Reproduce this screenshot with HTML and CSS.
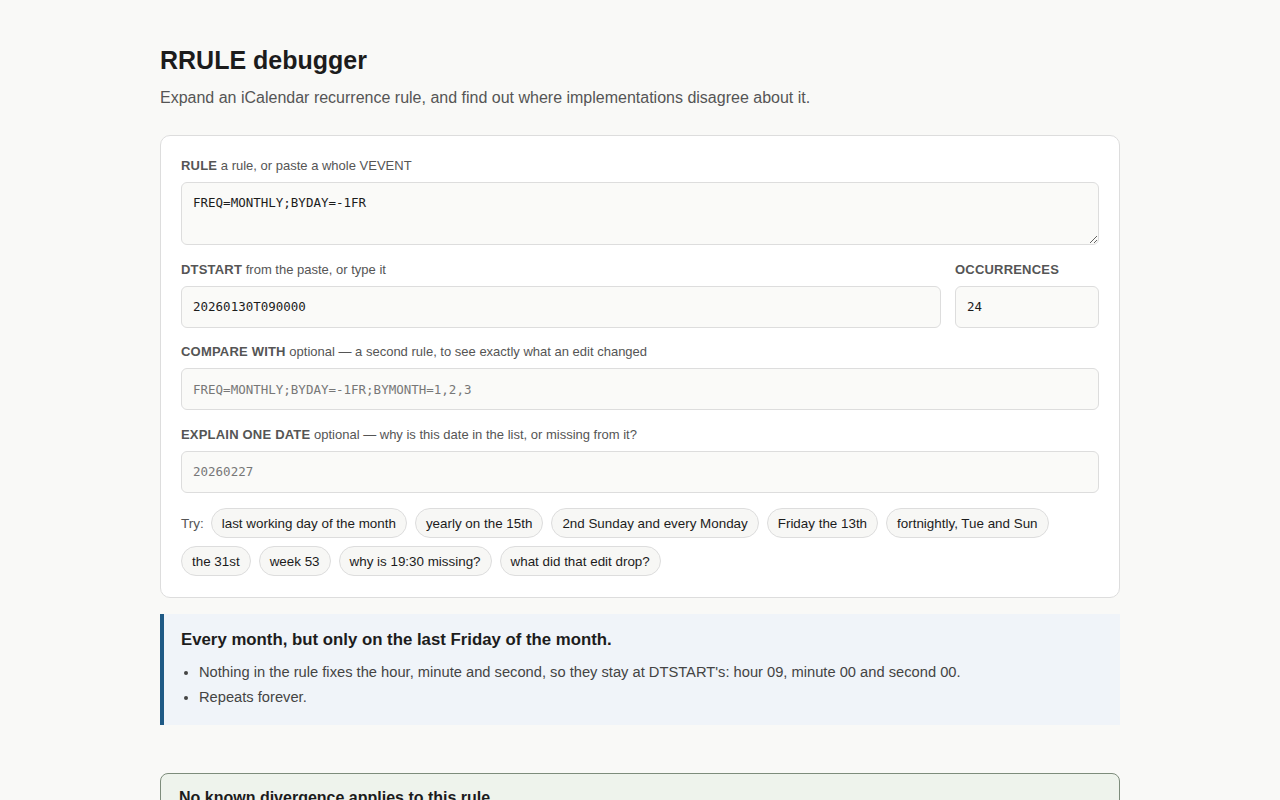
FILE: index.html
```html
<!DOCTYPE html>
<html lang="en">
<head>
  <meta charset="UTF-8" />
  <meta name="viewport" content="width=device-width, initial-scale=1.0"/>
  <title>RRULE debugger</title>
  <link rel="stylesheet" href="styles.css">
</head>
<body>
  <main class="page">
    <h1>RRULE debugger</h1>
    <p class="lead">Expand an iCalendar recurrence rule, and find out where implementations disagree about it.</p>

    <section class="card">
      <div class="field">
        <label><b>RULE</b> a rule, or paste a whole VEVENT</label>
        <textarea class="mono" rows="2">FREQ=MONTHLY;BYDAY=-1FR</textarea>
      </div>

      <div class="row">
        <div class="field grow">
          <label><b>DTSTART</b> from the paste, or type it</label>
          <input class="mono" type="text" value="20260130T090000" />
        </div>
        <div class="field count">
          <label><b>OCCURRENCES</b></label>
          <input class="mono" type="text" value="24" />
        </div>
      </div>

      <div class="field">
        <label><b>COMPARE WITH</b> optional — a second rule, to see exactly what an edit changed</label>
        <input class="mono" type="text" placeholder="FREQ=MONTHLY;BYDAY=-1FR;BYMONTH=1,2,3" />
      </div>

      <div class="field">
        <label><b>EXPLAIN ONE DATE</b> optional — why is this date in the list, or missing from it?</label>
        <input class="mono" type="text" placeholder="20260227" />
      </div>

      <div class="examples">
        <span class="try">Try:</span>
        <button class="chip">last working day of the month</button>
        <button class="chip">yearly on the 15th</button>
        <button class="chip">2nd Sunday and every Monday</button>
        <button class="chip">Friday the 13th</button>
        <button class="chip">fortnightly, Tue and Sun</button>
        <button class="chip">the 31st</button>
        <button class="chip">week 53</button>
        <button class="chip">why is 19:30 missing?</button>
        <button class="chip">what did that edit drop?</button>
      </div>
    </section>

    <section class="summary">
      <h2>Every month, but only on the last Friday of the month.</h2>
      <ul>
        <li>Nothing in the rule fixes the hour, minute and second, so they stay at DTSTART's: hour 09, minute 00 and second 00.</li>
        <li>Repeats forever.</li>
      </ul>
    </section>

    <section class="verdict">
      <h2>No known divergence applies to this rule.</h2>
    </section>
  </main>
</body>
</html>
```

FILE: styles.css
```css
body {
  margin: 0;
  background: #f9f9f7;
  color: #1c1c1c;
  font-family: "Liberation Sans", Arial, sans-serif;
}

.page {
  width: 960px;
  margin: 0 auto;
  padding-top: 46px;
}

h1 {
  font-size: 25px;
  margin: 0 0 14px;
  color: #1c1c1c;
}

.lead {
  font-size: 16px;
  color: #555;
  margin: 0 0 28px;
}

.card {
  background: #fff;
  border: 1px solid #ddd;
  border-radius: 10px;
  padding: 22px 20px 21px;
  display: flex;
  flex-direction: column;
  gap: 16.5px;
}

.field {
  display: flex;
  flex-direction: column;
  gap: 8px;
}

label {
  font-size: 13px;
  color: #555;
  line-height: 16px;
}

label b {
  letter-spacing: 0.2px;
}

.mono {
  font-family: "DejaVu Sans Mono", monospace;
  font-size: 12.5px;
}

textarea, input {
  box-sizing: border-box;
  width: 100%;
  background: #fafaf8;
  border: 1px solid #ddd;
  border-radius: 6px;
  color: #1c1c1c;
  padding: 0 11px;
  margin: 0;
}

textarea {
  height: 63px;
  padding-top: 11px;
  line-height: 18px;
}

input {
  height: 42px;
}

input::placeholder {
  color: #777;
}

.row {
  display: flex;
  gap: 14px;
}

.grow {
  flex: 1;
}

.count {
  width: 144px;
}

.examples {
  display: flex;
  flex-wrap: wrap;
  align-items: center;
  gap: 8px;
  margin-top: -1px;
}

.try {
  font-size: 13.5px;
  color: #555;
  margin-right: -1px;
}

.chip {
  font-family: "Liberation Sans", Arial, sans-serif;
  font-size: 13.4px;
  color: #1c1c1c;
  background: #f7f7f5;
  border: 1px solid #ddd;
  border-radius: 16px;
  height: 30px;
  padding: 0 10px;
  cursor: pointer;
}

.summary {
  margin-top: 16px;
  background: #f0f4f9;
  border-left: 4px solid #1f5a85;
  padding: 16px 17px 15px;
}

.summary h2 {
  font-size: 16.8px;
  margin: 0 0 10px;
}

.summary ul {
  margin: 0;
  padding-left: 18px;
  font-size: 14.7px;
  color: #444;
  line-height: 25px;
}

.verdict {
  margin-top: 48px;
  background: #eef3ec;
  border: 1px solid #7d8c7b;
  border-radius: 8px;
  padding: 15px 18px;
}

.verdict h2 {
  font-size: 16px;
  margin: 0;
}
```
